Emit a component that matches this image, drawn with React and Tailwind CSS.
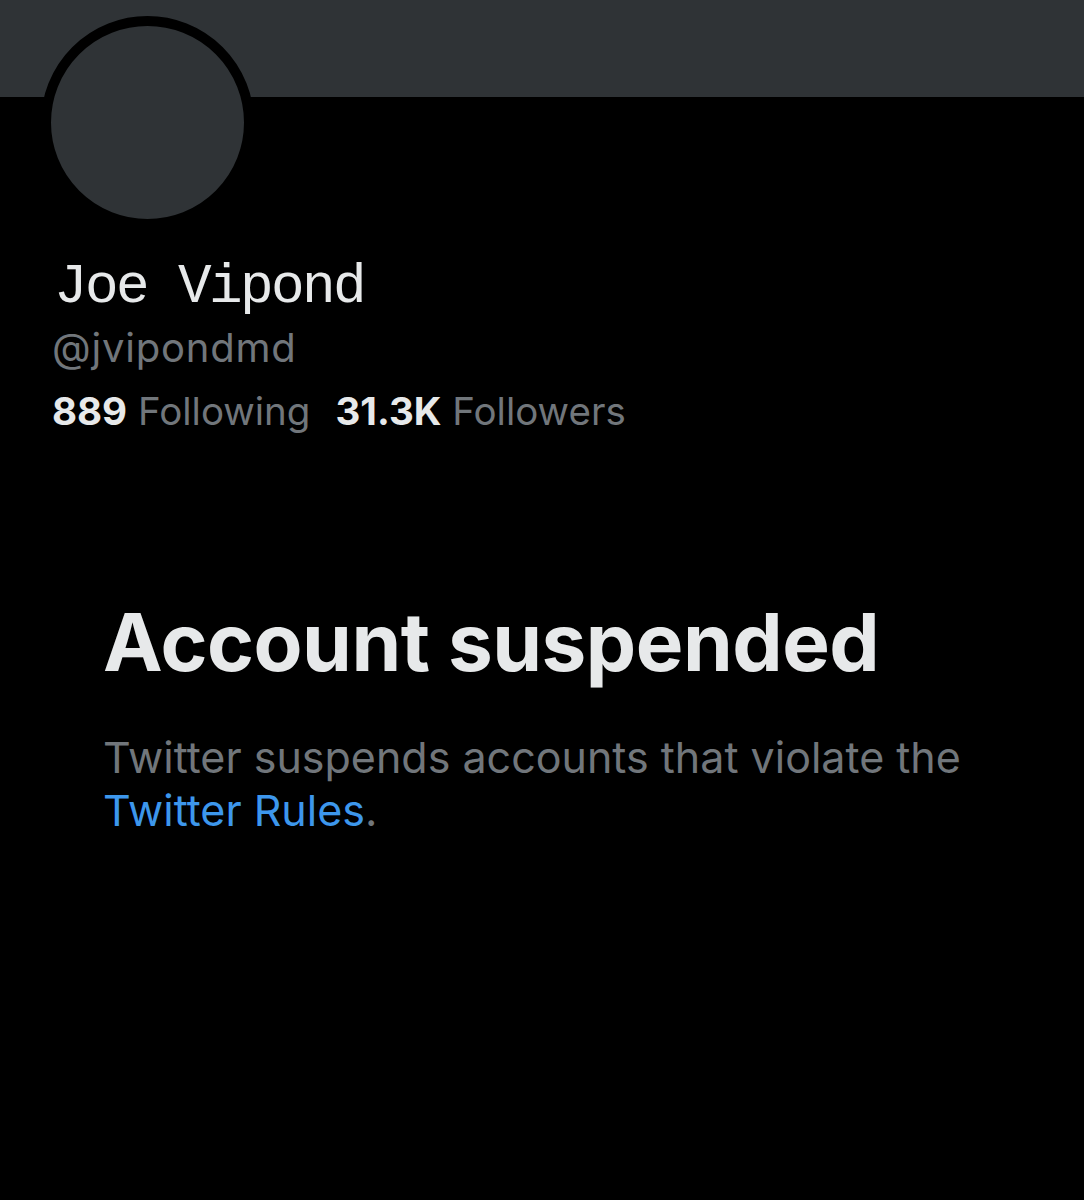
export default function App() {
  return (
    <div className="w-[1084px] h-[1200px] bg-black overflow-hidden" style={{ fontFamily: 'Inter, "Liberation Sans", sans-serif' }}>
      <div className="h-[97px] bg-[#2f3336]" />
      <div className="pl-[41px] -mt-[81px]">
        <div className="w-[213px] h-[213px] rounded-full border-[10px] border-black bg-[#2f3336]" />
      </div>
      <div className="pl-[54px] pt-[28px]">
        <div className="text-[56px] leading-[60px] tracking-[-2.6px] text-[#e7e9ea]" style={{ fontFamily: '"Liberation Mono", monospace' }}>Joe Vipond</div>
        <div className="text-[40px] leading-[62px] tracking-[0.8px] text-[#71767b] -ml-[2px]">@jvipondmd</div>
        <div className="text-[38.5px] leading-[65px] text-[#71767b] -ml-[2px] flex gap-[25px]">
          <span><span className="font-bold text-[#e7e9ea]">889</span> Following</span>
          <span><span className="font-bold text-[#e7e9ea]">31.3K</span> Followers</span>
        </div>
      </div>
      <div className="pl-[103px] pt-[150px]">
        <div className="text-[80px] leading-[96px] font-bold text-[#e7e9ea] tracking-[-0.5px]">Account suspended</div>
        <div className="mt-[41px] text-[43px] leading-[53px] text-[#71767b]">
          Twitter suspends accounts that violate the<br />
          <span className="text-[#3d97ec]">Twitter Rules</span>.
        </div>
      </div>
    </div>
  );
}
